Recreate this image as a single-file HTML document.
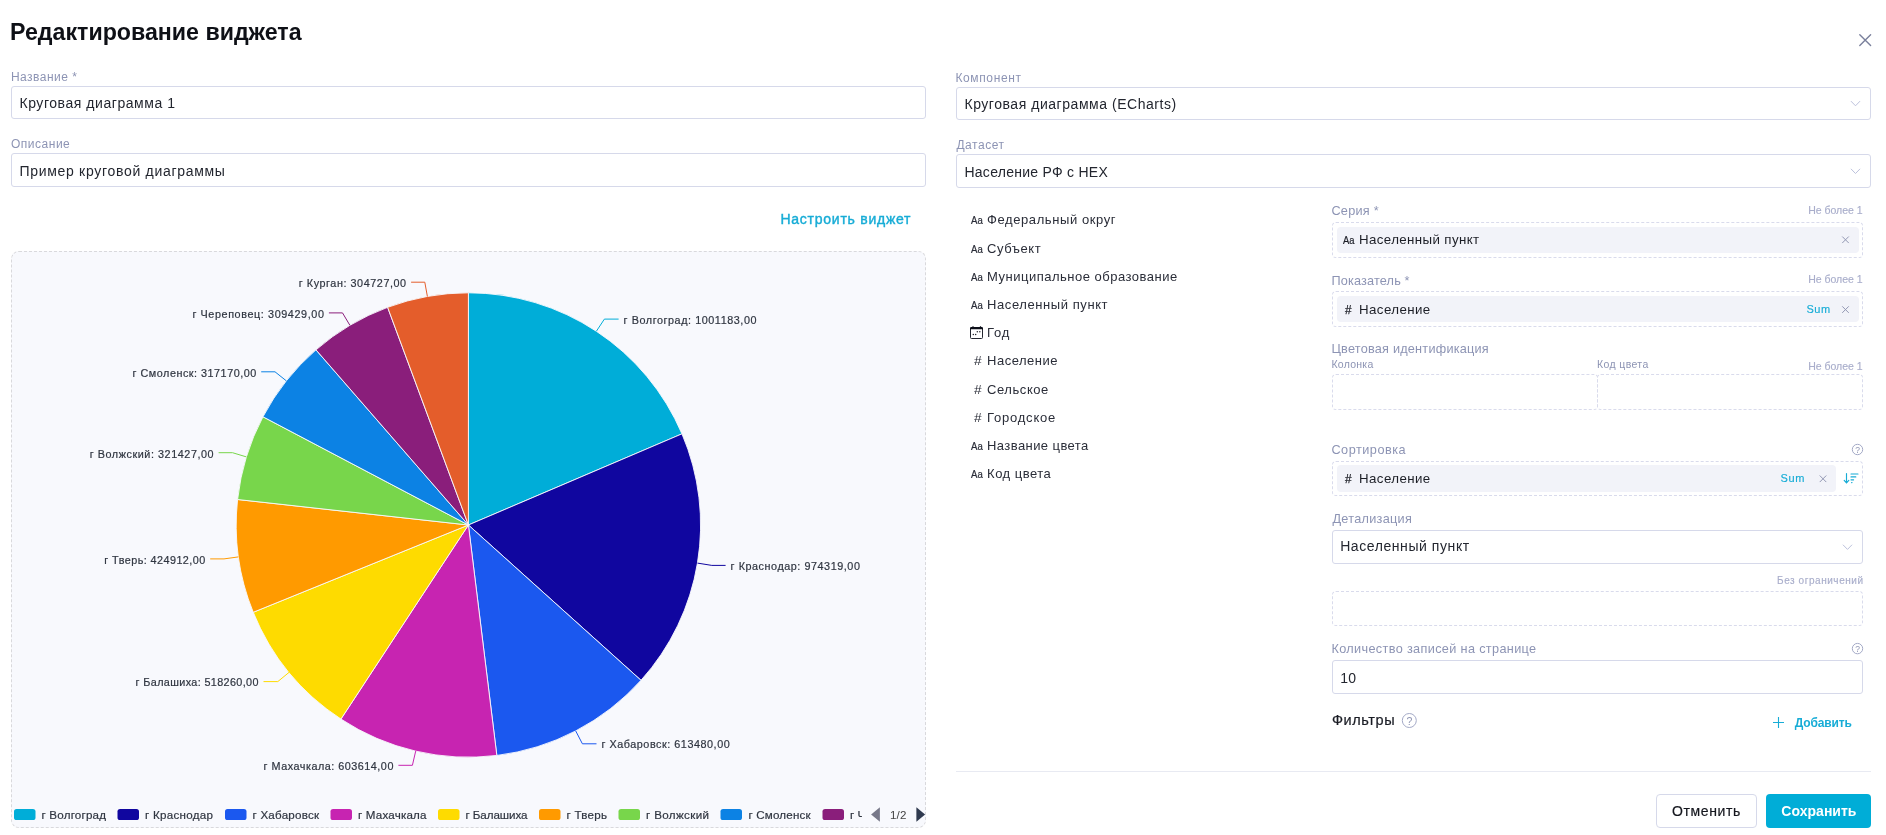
<!doctype html>
<html lang="ru"><head><meta charset="utf-8"><title>Редактирование виджета</title><style>
html,body{margin:0;padding:0;background:#fff}
body{width:1886px;height:835px;position:relative;overflow:hidden;font-family:"Liberation Sans", sans-serif}
.t{position:absolute;white-space:nowrap;line-height:1}
.texts{position:absolute;left:0;top:0;width:1886px;height:835px;will-change:transform}
.bx{position:absolute;box-sizing:border-box}
.ic{position:absolute;overflow:visible}
.gl{will-change:transform}
</style></head>
<body>
<div class="bx" style="left:11px;top:86px;width:915px;height:33px;border:1px solid #d6d9ea;border-radius:3px;background:#fff;"></div>
<div class="bx" style="left:11px;top:153px;width:915px;height:34px;border:1px solid #d6d9ea;border-radius:3px;background:#fff;"></div>
<div class="bx" style="left:956px;top:87px;width:915px;height:33px;border:1px solid #d6d9ea;border-radius:3px;background:#fff;"></div>
<div class="bx" style="left:956px;top:154px;width:915px;height:34px;border:1px solid #d6d9ea;border-radius:3px;background:#fff;"></div>
<div class="bx" style="left:11px;top:251px;width:915px;height:577px;border:1px dashed #d9d9dc;border-radius:8px;background:#f8f9fd;"></div>
<div class="bx" style="left:1332px;top:222px;width:531px;height:36px;border:1px dashed #d9dbec;border-radius:4px;"></div>
<div class="bx" style="left:1337px;top:227px;width:522px;height:26px;background:#f2f3f9;border-radius:4px;"></div>
<div class="bx" style="left:1332px;top:291px;width:531px;height:36px;border:1px dashed #d9dbec;border-radius:4px;"></div>
<div class="bx" style="left:1337px;top:296px;width:522px;height:26px;background:#f2f3f9;border-radius:4px;"></div>
<div class="bx" style="left:1332px;top:374px;width:265.5px;height:36px;border:1px dashed #d9dbec;border-radius:4px;"></div>
<div class="bx" style="left:1596.5px;top:374px;width:266.5px;height:36px;border:1px dashed #d9dbec;border-radius:4px;"></div>
<div class="bx" style="left:1332px;top:461px;width:531px;height:35px;border:1px dashed #d9dbec;border-radius:4px;"></div>
<div class="bx" style="left:1337px;top:465px;width:499px;height:27px;background:#f2f3f9;border-radius:4px;"></div>
<div class="bx" style="left:1332px;top:530px;width:531px;height:34px;border:1px solid #d6d9ea;border-radius:3px;background:#fff;"></div>
<div class="bx" style="left:1332px;top:591px;width:531px;height:35px;border:1px dashed #d9dbec;border-radius:4px;"></div>
<div class="bx" style="left:1332px;top:660px;width:531px;height:34px;border:1px solid #d6d9ea;border-radius:3px;background:#fff;"></div>
<div class="bx" style="left:956px;top:771px;width:915px;height:1px;background:#e8eaf2;"></div>
<div class="bx" style="left:1656px;top:794px;width:101px;height:34px;border:1px solid #d6d9ea;border-radius:4px;background:#fff;"></div>
<div class="bx" style="left:1766px;top:794px;width:105px;height:34px;background:#00add7;border-radius:4px;"></div>
<svg class="ic gl" style="left:11px;top:251px" width="916" height="578" viewBox="11 251 916 578" font-family="Liberation Sans, sans-serif"><defs><clipPath id="lc"><rect x="840" y="800" width="22" height="30"/></clipPath></defs><path d="M468.4 525.0L468.40 292.80A232.2 232.2 0 0 1 681.96 433.85Z" fill="#00add8" stroke="#f8f9fd" stroke-width="0.9" stroke-linejoin="round"/><path d="M468.4 525.0L681.96 433.85A232.2 232.2 0 0 1 641.01 680.31Z" fill="#10069f" stroke="#f8f9fd" stroke-width="0.9" stroke-linejoin="round"/><path d="M468.4 525.0L641.01 680.31A232.2 232.2 0 0 1 496.83 755.45Z" fill="#1b58ef" stroke="#f8f9fd" stroke-width="0.9" stroke-linejoin="round"/><path d="M468.4 525.0L496.83 755.45A232.2 232.2 0 0 1 340.94 719.09Z" fill="#c724b1" stroke="#f8f9fd" stroke-width="0.9" stroke-linejoin="round"/><path d="M468.4 525.0L340.94 719.09A232.2 232.2 0 0 1 253.23 612.29Z" fill="#fedb00" stroke="#f8f9fd" stroke-width="0.9" stroke-linejoin="round"/><path d="M468.4 525.0L253.23 612.29A232.2 232.2 0 0 1 237.60 499.50Z" fill="#ff9a00" stroke="#f8f9fd" stroke-width="0.9" stroke-linejoin="round"/><path d="M468.4 525.0L237.60 499.50A232.2 232.2 0 0 1 262.96 416.78Z" fill="#78d64b" stroke="#f8f9fd" stroke-width="0.9" stroke-linejoin="round"/><path d="M468.4 525.0L262.96 416.78A232.2 232.2 0 0 1 315.97 349.84Z" fill="#0c82e4" stroke="#f8f9fd" stroke-width="0.9" stroke-linejoin="round"/><path d="M468.4 525.0L315.97 349.84A232.2 232.2 0 0 1 387.62 307.30Z" fill="#8a1e7b" stroke="#f8f9fd" stroke-width="0.9" stroke-linejoin="round"/><path d="M468.4 525.0L387.62 307.30A232.2 232.2 0 0 1 468.40 292.80Z" fill="#e45d2b" stroke="#f8f9fd" stroke-width="0.9" stroke-linejoin="round"/><polyline points="596.4,331.2 604.4,319.1 618.6,319.1" fill="none" stroke="#00add8" stroke-width="1"/><text x="623.6" y="324.1" textLength="132.9" lengthAdjust="spacing" font-size="10.8" fill="#2f3540" stroke="#2f3540" stroke-width="0.2">г Волгоград: 1001183,00</text><polyline points="697.5,563.1 711.8,565.4 725.6,565.4" fill="none" stroke="#10069f" stroke-width="1"/><text x="730.6" y="570.2" textLength="129.3" lengthAdjust="spacing" font-size="10.8" fill="#2f3540" stroke="#2f3540" stroke-width="0.2">г Краснодар: 974319,00</text><polyline points="575.7,730.9 582.4,743.8 596.5,743.8" fill="none" stroke="#1b58ef" stroke-width="1"/><text x="601.5" y="747.8" textLength="128.2" lengthAdjust="spacing" font-size="10.8" fill="#2f3540" stroke="#2f3540" stroke-width="0.2">г Хабаровск: 613480,00</text><polyline points="415.7,751.1 412.4,765.3 398.4,765.3" fill="none" stroke="#c724b1" stroke-width="1"/><text x="263.6" y="769.9" textLength="129.8" lengthAdjust="spacing" font-size="10.8" fill="#2f3540" stroke="#2f3540" stroke-width="0.2">г Махачкала: 603614,00</text><polyline points="289.0,672.4 277.8,681.6 263.5,681.6" fill="none" stroke="#fedb00" stroke-width="1"/><text x="135.6" y="685.5" textLength="122.9" lengthAdjust="spacing" font-size="10.8" fill="#2f3540" stroke="#2f3540" stroke-width="0.2">г Балашиха: 518260,00</text><polyline points="238.4,556.9 224.0,558.9 210.2,558.9" fill="none" stroke="#ff9a00" stroke-width="1"/><text x="104.3" y="563.6" textLength="100.9" lengthAdjust="spacing" font-size="10.8" fill="#2f3540" stroke="#2f3540" stroke-width="0.2">г Тверь: 424912,00</text><polyline points="246.4,456.9 232.5,452.7 218.6,452.7" fill="none" stroke="#78d64b" stroke-width="1"/><text x="89.7" y="457.5" textLength="123.9" lengthAdjust="spacing" font-size="10.8" fill="#2f3540" stroke="#2f3540" stroke-width="0.2">г Волжский: 321427,00</text><polyline points="286.4,380.9 275.0,371.8 261.2,371.8" fill="none" stroke="#0c82e4" stroke-width="1"/><text x="132.6" y="377.2" textLength="123.6" lengthAdjust="spacing" font-size="10.8" fill="#2f3540" stroke="#2f3540" stroke-width="0.2">г Смоленск: 317170,00</text><polyline points="349.9,325.3 342.5,312.9 328.9,312.9" fill="none" stroke="#8a1e7b" stroke-width="1"/><text x="192.4" y="317.6" textLength="131.5" lengthAdjust="spacing" font-size="10.8" fill="#2f3540" stroke="#2f3540" stroke-width="0.2">г Череповец: 309429,00</text><polyline points="427.4,296.5 424.8,282.2 411.1,282.2" fill="none" stroke="#e45d2b" stroke-width="1"/><text x="298.8" y="286.6" textLength="107.3" lengthAdjust="spacing" font-size="10.8" fill="#2f3540" stroke="#2f3540" stroke-width="0.2">г Курган: 304727,00</text><rect x="14" y="809" width="21.5" height="11" rx="2.6" fill="#00add8"/><text x="41.5" y="818.6" textLength="64.5" lengthAdjust="spacing" font-size="11.6" fill="#2f3540" stroke="#2f3540" stroke-width="0.2">г Волгоград</text><rect x="117.5" y="809" width="21.5" height="11" rx="2.6" fill="#10069f"/><text x="145" y="818.6" textLength="68" lengthAdjust="spacing" font-size="11.6" fill="#2f3540" stroke="#2f3540" stroke-width="0.2">г Краснодар</text><rect x="225" y="809" width="21.5" height="11" rx="2.6" fill="#1b58ef"/><text x="252.5" y="818.6" textLength="66.5" lengthAdjust="spacing" font-size="11.6" fill="#2f3540" stroke="#2f3540" stroke-width="0.2">г Хабаровск</text><rect x="330.5" y="809" width="21.5" height="11" rx="2.6" fill="#c724b1"/><text x="358" y="818.6" textLength="68.5" lengthAdjust="spacing" font-size="11.6" fill="#2f3540" stroke="#2f3540" stroke-width="0.2">г Махачкала</text><rect x="438" y="809" width="21.5" height="11" rx="2.6" fill="#fedb00"/><text x="465.5" y="818.6" textLength="62.0" lengthAdjust="spacing" font-size="11.6" fill="#2f3540" stroke="#2f3540" stroke-width="0.2">г Балашиха</text><rect x="539" y="809" width="21.5" height="11" rx="2.6" fill="#ff9a00"/><text x="566.5" y="818.6" textLength="40.5" lengthAdjust="spacing" font-size="11.6" fill="#2f3540" stroke="#2f3540" stroke-width="0.2">г Тверь</text><rect x="618.5" y="809" width="21.5" height="11" rx="2.6" fill="#78d64b"/><text x="646" y="818.6" textLength="63" lengthAdjust="spacing" font-size="11.6" fill="#2f3540" stroke="#2f3540" stroke-width="0.2">г Волжский</text><rect x="720.5" y="809" width="21.5" height="11" rx="2.6" fill="#0c82e4"/><text x="748.5" y="818.6" textLength="62.0" lengthAdjust="spacing" font-size="11.6" fill="#2f3540" stroke="#2f3540" stroke-width="0.2">г Смоленск</text><rect x="822.5" y="809" width="21.5" height="11" rx="2.6" fill="#8a1e7b"/><text x="850" y="818.6" font-size="11.6" fill="#2f3540" stroke="#2f3540" stroke-width="0.2" clip-path="url(#lc)">г Череповец</text><path d="M871.1 814.5L879.9 807.3V821.7Z" fill="#777889"/><path d="M925.1 814.5L916.4 807.3V821.7Z" fill="#2f3a4f"/><text x="890" y="818.7" textLength="16.4" lengthAdjust="spacing" font-size="11.6" fill="#444">1/2</text></svg>
<svg class="ic gl" style="left:1858px;top:33px" width="15" height="15" viewBox="0 0 15 15"><g transform="translate(0.80 0.80)"><path d="M1 1L11.8 11.8M11.8 1L1 11.8" stroke="#7a809c" stroke-width="1.4" fill="none" stroke-linecap="round"/></g></svg>
<svg class="ic gl" style="left:1841px;top:235px" width="10" height="10" viewBox="0 0 10 10"><g transform="translate(0.50 0.80)"><path d="M1 1L7.0 7.0M7.0 1L1 7.0" stroke="#9297b3" stroke-width="1.0" fill="none" stroke-linecap="round"/></g></svg>
<svg class="ic gl" style="left:1841px;top:305px" width="10" height="10" viewBox="0 0 10 10"><g transform="translate(0.50 0.60)"><path d="M1 1L7.0 7.0M7.0 1L1 7.0" stroke="#9297b3" stroke-width="1.0" fill="none" stroke-linecap="round"/></g></svg>
<svg class="ic gl" style="left:1819px;top:474px" width="9" height="10" viewBox="0 0 9 10"><g transform="translate(0.00 0.80)"><path d="M1 1L7.0 7.0M7.0 1L1 7.0" stroke="#9297b3" stroke-width="1.0" fill="none" stroke-linecap="round"/></g></svg>
<svg class="ic gl" style="left:1850px;top:100px" width="12" height="9" viewBox="0 0 12 9"><g transform="translate(0.00 0.20)"><path d="M1.2 1.2L5.5 5.6L9.8 1.2" stroke="#bcc1dc" stroke-width="1" fill="none" stroke-linecap="round" stroke-linejoin="round"/></g></svg>
<svg class="ic gl" style="left:1850px;top:167px" width="12" height="9" viewBox="0 0 12 9"><g transform="translate(0.00 0.90)"><path d="M1.2 1.2L5.5 5.6L9.8 1.2" stroke="#bcc1dc" stroke-width="1" fill="none" stroke-linecap="round" stroke-linejoin="round"/></g></svg>
<svg class="ic gl" style="left:1842px;top:543px" width="12" height="9" viewBox="0 0 12 9"><g transform="translate(0.00 0.80)"><path d="M1.2 1.2L5.5 5.6L9.8 1.2" stroke="#bcc1dc" stroke-width="1" fill="none" stroke-linecap="round" stroke-linejoin="round"/></g></svg>
<svg class="ic gl" style="left:1851px;top:443px" width="14" height="14" viewBox="0 0 14 14"><g transform="translate(0.30 0.30)"><circle cx="6.2" cy="6.2" r="5.2" fill="none" stroke="#a3a9c6" stroke-width="1"/><text x="6.2" y="9.76" font-family="Liberation Sans, sans-serif" font-size="8.5" text-anchor="middle" fill="#8f95b3">?</text></g></svg>
<svg class="ic gl" style="left:1851px;top:642px" width="14" height="14" viewBox="0 0 14 14"><g transform="translate(0.30 0.40)"><circle cx="6.2" cy="6.2" r="5.2" fill="none" stroke="#a3a9c6" stroke-width="1"/><text x="6.2" y="9.76" font-family="Liberation Sans, sans-serif" font-size="8.5" text-anchor="middle" fill="#8f95b3">?</text></g></svg>
<svg class="ic gl" style="left:1401px;top:712px" width="18" height="18" viewBox="0 0 18 18"><g transform="translate(0.30 0.50)"><circle cx="8" cy="8" r="7" fill="none" stroke="#a3a9c6" stroke-width="1"/><text x="8" y="12.28" font-family="Liberation Sans, sans-serif" font-size="10.5" text-anchor="middle" fill="#8f95b3">?</text></g></svg>
<svg class="ic gl" style="left:1772px;top:717px" width="13" height="13" viewBox="0 0 13 13"><g transform="translate(0.00 0.00)"><path d="M6.5 0V11M1 5.5H12" stroke="#17acd6" stroke-width="1.1" fill="none"/></g></svg>
<svg class="ic gl" style="left:1843px;top:472px" width="18" height="14" viewBox="0 0 18 14"><g transform="translate(0.00 0.00)"><g stroke="#17acd6" fill="none" stroke-width="1.15" stroke-linecap="round"><path d="M3.5 1.6V10.6M1.2 8.4L3.5 10.9L5.8 8.4"/><path d="M8 2H15M8 4.9H12.8M8 7.8H10.6M8.6 10.6H9"/></g></g></svg>
<svg class="ic gl" style="left:969px;top:325px" width="16" height="16" viewBox="0 0 16 16"><g transform="translate(0.00 0.00)"><g fill="none" stroke="#23262f" stroke-width="1"><path d="M1.5 3.5V12.6Q1.5 13.5 2.4 13.5H12.6Q13.5 13.5 13.5 12.6V3.5"/></g><path d="M1 4.2V3.2Q1 2 2.2 2H3.2L3.6 1.3H4.4L4.8 2H10.7L11.1 1.3H11.9L12.3 2H12.8Q14 2 14 3.2V4.2Z" fill="#0c0e18"/><g fill="#23262f"><circle cx="4.3" cy="9.4" r="0.75"/><circle cx="6.7" cy="9.4" r="0.75"/><circle cx="8.3" cy="6.7" r="0.75"/><circle cx="10.8" cy="6.7" r="0.75"/></g></g></svg>
<div class="texts">
<span class="t" style="left:10.05px;top:21.00px;font-size:23.2px;font-weight:700;color:#0e1016;letter-spacing:-0.002px;">Редактирование виджета</span>
<span class="t" style="left:10.95px;top:71.00px;font-size:12px;font-weight:400;color:#8d94b4;letter-spacing:0.483px;">Название *</span>
<span class="t" style="left:19.45px;top:96.00px;font-size:14px;font-weight:400;color:#23262f;letter-spacing:0.555px;">Круговая диаграмма 1</span>
<span class="t" style="left:10.95px;top:138.00px;font-size:12px;font-weight:400;color:#8d94b4;letter-spacing:0.521px;">Описание</span>
<span class="t" style="left:19.45px;top:164.00px;font-size:14px;font-weight:400;color:#23262f;letter-spacing:0.702px;">Пример круговой диаграммы</span>
<span class="t" style="left:955.45px;top:72.00px;font-size:12px;font-weight:400;color:#8d94b4;letter-spacing:0.631px;">Компонент</span>
<span class="t" style="left:964.45px;top:97.00px;font-size:14px;font-weight:400;color:#23262f;letter-spacing:0.539px;">Круговая диаграмма (ECharts)</span>
<span class="t" style="left:956.45px;top:139.00px;font-size:12px;font-weight:400;color:#8d94b4;letter-spacing:0.550px;">Датасет</span>
<span class="t" style="left:964.45px;top:165.00px;font-size:14px;font-weight:400;color:#23262f;letter-spacing:0.268px;">Население РФ с HEX</span>
<span class="t" style="left:780.45px;top:212.00px;font-size:14px;font-weight:400;color:#17acd6;letter-spacing:0.750px;-webkit-text-stroke:0.4px #17acd6;">Настроить виджет</span>
<span class="t" style="left:987.05px;top:213.00px;font-size:13px;font-weight:400;color:#2a2d38;letter-spacing:0.591px;">Федеральный округ</span>
<span class="t" style="left:971.45px;top:215.00px;font-size:10.8px;font-weight:400;color:#2a2d38;letter-spacing:0.000px;-webkit-text-stroke:0.2px #2a2d38;transform:scaleX(0.888);transform-origin:0 0;">Aa</span>
<span class="t" style="left:987.05px;top:242.00px;font-size:13px;font-weight:400;color:#2a2d38;letter-spacing:0.575px;">Субъект</span>
<span class="t" style="left:971.45px;top:244.00px;font-size:10.8px;font-weight:400;color:#2a2d38;letter-spacing:0.000px;-webkit-text-stroke:0.2px #2a2d38;transform:scaleX(0.888);transform-origin:0 0;">Aa</span>
<span class="t" style="left:987.05px;top:270.00px;font-size:13px;font-weight:400;color:#2a2d38;letter-spacing:0.498px;">Муниципальное образование</span>
<span class="t" style="left:971.45px;top:272.00px;font-size:10.8px;font-weight:400;color:#2a2d38;letter-spacing:0.000px;-webkit-text-stroke:0.2px #2a2d38;transform:scaleX(0.888);transform-origin:0 0;">Aa</span>
<span class="t" style="left:987.05px;top:298.00px;font-size:13px;font-weight:400;color:#2a2d38;letter-spacing:0.580px;">Населенный пункт</span>
<span class="t" style="left:971.45px;top:300.00px;font-size:10.8px;font-weight:400;color:#2a2d38;letter-spacing:0.000px;-webkit-text-stroke:0.2px #2a2d38;transform:scaleX(0.888);transform-origin:0 0;">Aa</span>
<span class="t" style="left:987.05px;top:326.00px;font-size:13px;font-weight:400;color:#2a2d38;letter-spacing:0.850px;">Год</span>
<span class="t" style="left:987.05px;top:354.00px;font-size:13px;font-weight:400;color:#2a2d38;letter-spacing:0.494px;">Население</span>
<span class="t" style="left:974.05px;top:355.00px;font-size:12px;font-weight:400;color:#2a2d38;letter-spacing:0.000px;transform:scaleX(1.142);transform-origin:0 0;">#</span>
<span class="t" style="left:987.05px;top:383.00px;font-size:13px;font-weight:400;color:#2a2d38;letter-spacing:0.564px;">Сельское</span>
<span class="t" style="left:974.05px;top:384.00px;font-size:12px;font-weight:400;color:#2a2d38;letter-spacing:0.000px;transform:scaleX(1.142);transform-origin:0 0;">#</span>
<span class="t" style="left:987.05px;top:411.00px;font-size:13px;font-weight:400;color:#2a2d38;letter-spacing:0.781px;">Городское</span>
<span class="t" style="left:974.05px;top:412.00px;font-size:12px;font-weight:400;color:#2a2d38;letter-spacing:0.000px;transform:scaleX(1.142);transform-origin:0 0;">#</span>
<span class="t" style="left:987.05px;top:439.00px;font-size:13px;font-weight:400;color:#2a2d38;letter-spacing:0.419px;">Название цвета</span>
<span class="t" style="left:971.45px;top:441.00px;font-size:10.8px;font-weight:400;color:#2a2d38;letter-spacing:0.000px;-webkit-text-stroke:0.2px #2a2d38;transform:scaleX(0.888);transform-origin:0 0;">Aa</span>
<span class="t" style="left:987.05px;top:467.00px;font-size:13px;font-weight:400;color:#2a2d38;letter-spacing:0.506px;">Код цвета</span>
<span class="t" style="left:971.45px;top:469.00px;font-size:10.8px;font-weight:400;color:#2a2d38;letter-spacing:0.000px;-webkit-text-stroke:0.2px #2a2d38;transform:scaleX(0.888);transform-origin:0 0;">Aa</span>
<span class="t" style="left:1331.45px;top:205.00px;font-size:12.7px;font-weight:400;color:#8d94b4;letter-spacing:0.258px;">Серия *</span>
<span class="t" style="left:1808.20px;top:205.00px;font-size:10.5px;font-weight:400;color:#a9aecb;letter-spacing:-0.022px;-webkit-text-stroke:0.15px #a9aecb;">Не более 1</span>
<span class="t" style="left:1342.95px;top:235.00px;font-size:10.8px;font-weight:400;color:#1c1e26;letter-spacing:0.000px;-webkit-text-stroke:0.2px #1c1e26;transform:scaleX(0.869);transform-origin:0 0;">Aa</span>
<span class="t" style="left:1359.05px;top:233.00px;font-size:13.3px;font-weight:400;color:#1c1e26;letter-spacing:0.380px;">Населенный пункт</span>
<span class="t" style="left:1331.45px;top:275.00px;font-size:12.7px;font-weight:400;color:#8d94b4;letter-spacing:0.164px;">Показатель *</span>
<span class="t" style="left:1808.20px;top:274.00px;font-size:10.5px;font-weight:400;color:#a9aecb;letter-spacing:-0.022px;-webkit-text-stroke:0.15px #a9aecb;">Не более 1</span>
<span class="t" style="left:1345.20px;top:304.00px;font-size:12px;font-weight:400;color:#1c1e26;letter-spacing:0.000px;-webkit-text-stroke:0.25px #1c1e26;transform:scaleX(0.971);transform-origin:0 0;">#</span>
<span class="t" style="left:1359.05px;top:303.00px;font-size:13.3px;font-weight:400;color:#1c1e26;letter-spacing:0.400px;">Население</span>
<span class="t" style="left:1806.45px;top:304.00px;font-size:11px;font-weight:400;color:#17acd6;letter-spacing:0.525px;-webkit-text-stroke:0.15px #17acd6;">Sum</span>
<span class="t" style="left:1331.45px;top:343.00px;font-size:12.7px;font-weight:400;color:#8d94b4;letter-spacing:0.229px;">Цветовая идентификация</span>
<span class="t" style="left:1331.45px;top:359.00px;font-size:10.5px;font-weight:400;color:#8d94b4;letter-spacing:0.258px;">Колонка</span>
<span class="t" style="left:1596.95px;top:359.00px;font-size:10.5px;font-weight:400;color:#8d94b4;letter-spacing:0.381px;">Код цвета</span>
<span class="t" style="left:1808.20px;top:361.00px;font-size:10.5px;font-weight:400;color:#a9aecb;letter-spacing:-0.022px;-webkit-text-stroke:0.15px #a9aecb;">Не более 1</span>
<span class="t" style="left:1331.45px;top:444.00px;font-size:12.7px;font-weight:400;color:#8d94b4;letter-spacing:0.506px;">Сортировка</span>
<span class="t" style="left:1345.45px;top:473.00px;font-size:12px;font-weight:400;color:#1c1e26;letter-spacing:0.000px;-webkit-text-stroke:0.25px #1c1e26;transform:scaleX(0.979);transform-origin:0 0;">#</span>
<span class="t" style="left:1359.05px;top:472.00px;font-size:13.3px;font-weight:400;color:#1c1e26;letter-spacing:0.400px;">Население</span>
<span class="t" style="left:1780.45px;top:473.00px;font-size:11px;font-weight:400;color:#17acd6;letter-spacing:0.625px;-webkit-text-stroke:0.15px #17acd6;">Sum</span>
<span class="t" style="left:1332.45px;top:513.00px;font-size:12.7px;font-weight:400;color:#8d94b4;letter-spacing:0.280px;">Детализация</span>
<span class="t" style="left:1340.20px;top:539.00px;font-size:14px;font-weight:400;color:#23262f;letter-spacing:0.570px;">Населенный пункт</span>
<span class="t" style="left:1777.05px;top:576.00px;font-size:10px;font-weight:400;color:#a9aecb;letter-spacing:0.561px;-webkit-text-stroke:0.15px #a9aecb;">Без ограничений</span>
<span class="t" style="left:1331.45px;top:643.00px;font-size:12.7px;font-weight:400;color:#8d94b4;letter-spacing:0.347px;">Количество записей на странице</span>
<span class="t" style="left:1340.20px;top:671.00px;font-size:14px;font-weight:400;color:#23262f;letter-spacing:0.300px;">10</span>
<span class="t" style="left:1331.95px;top:713.00px;font-size:14.5px;font-weight:400;color:#1a1c24;letter-spacing:0.592px;-webkit-text-stroke:0.22px #1a1c24;">Фильтры</span>
<span class="t" style="left:1794.75px;top:717.00px;font-size:12px;font-weight:700;color:#17acd6;letter-spacing:-0.136px;">Добавить</span>
<span class="t" style="left:1672.05px;top:803.50px;font-size:14px;font-weight:400;color:#15171e;letter-spacing:0.621px;-webkit-text-stroke:0.2px #15171e;">Отменить</span>
<span class="t" style="left:1781.35px;top:803.50px;font-size:14px;font-weight:700;color:#ffffff;letter-spacing:0.019px;">Сохранить</span>
</div>
</body></html>
